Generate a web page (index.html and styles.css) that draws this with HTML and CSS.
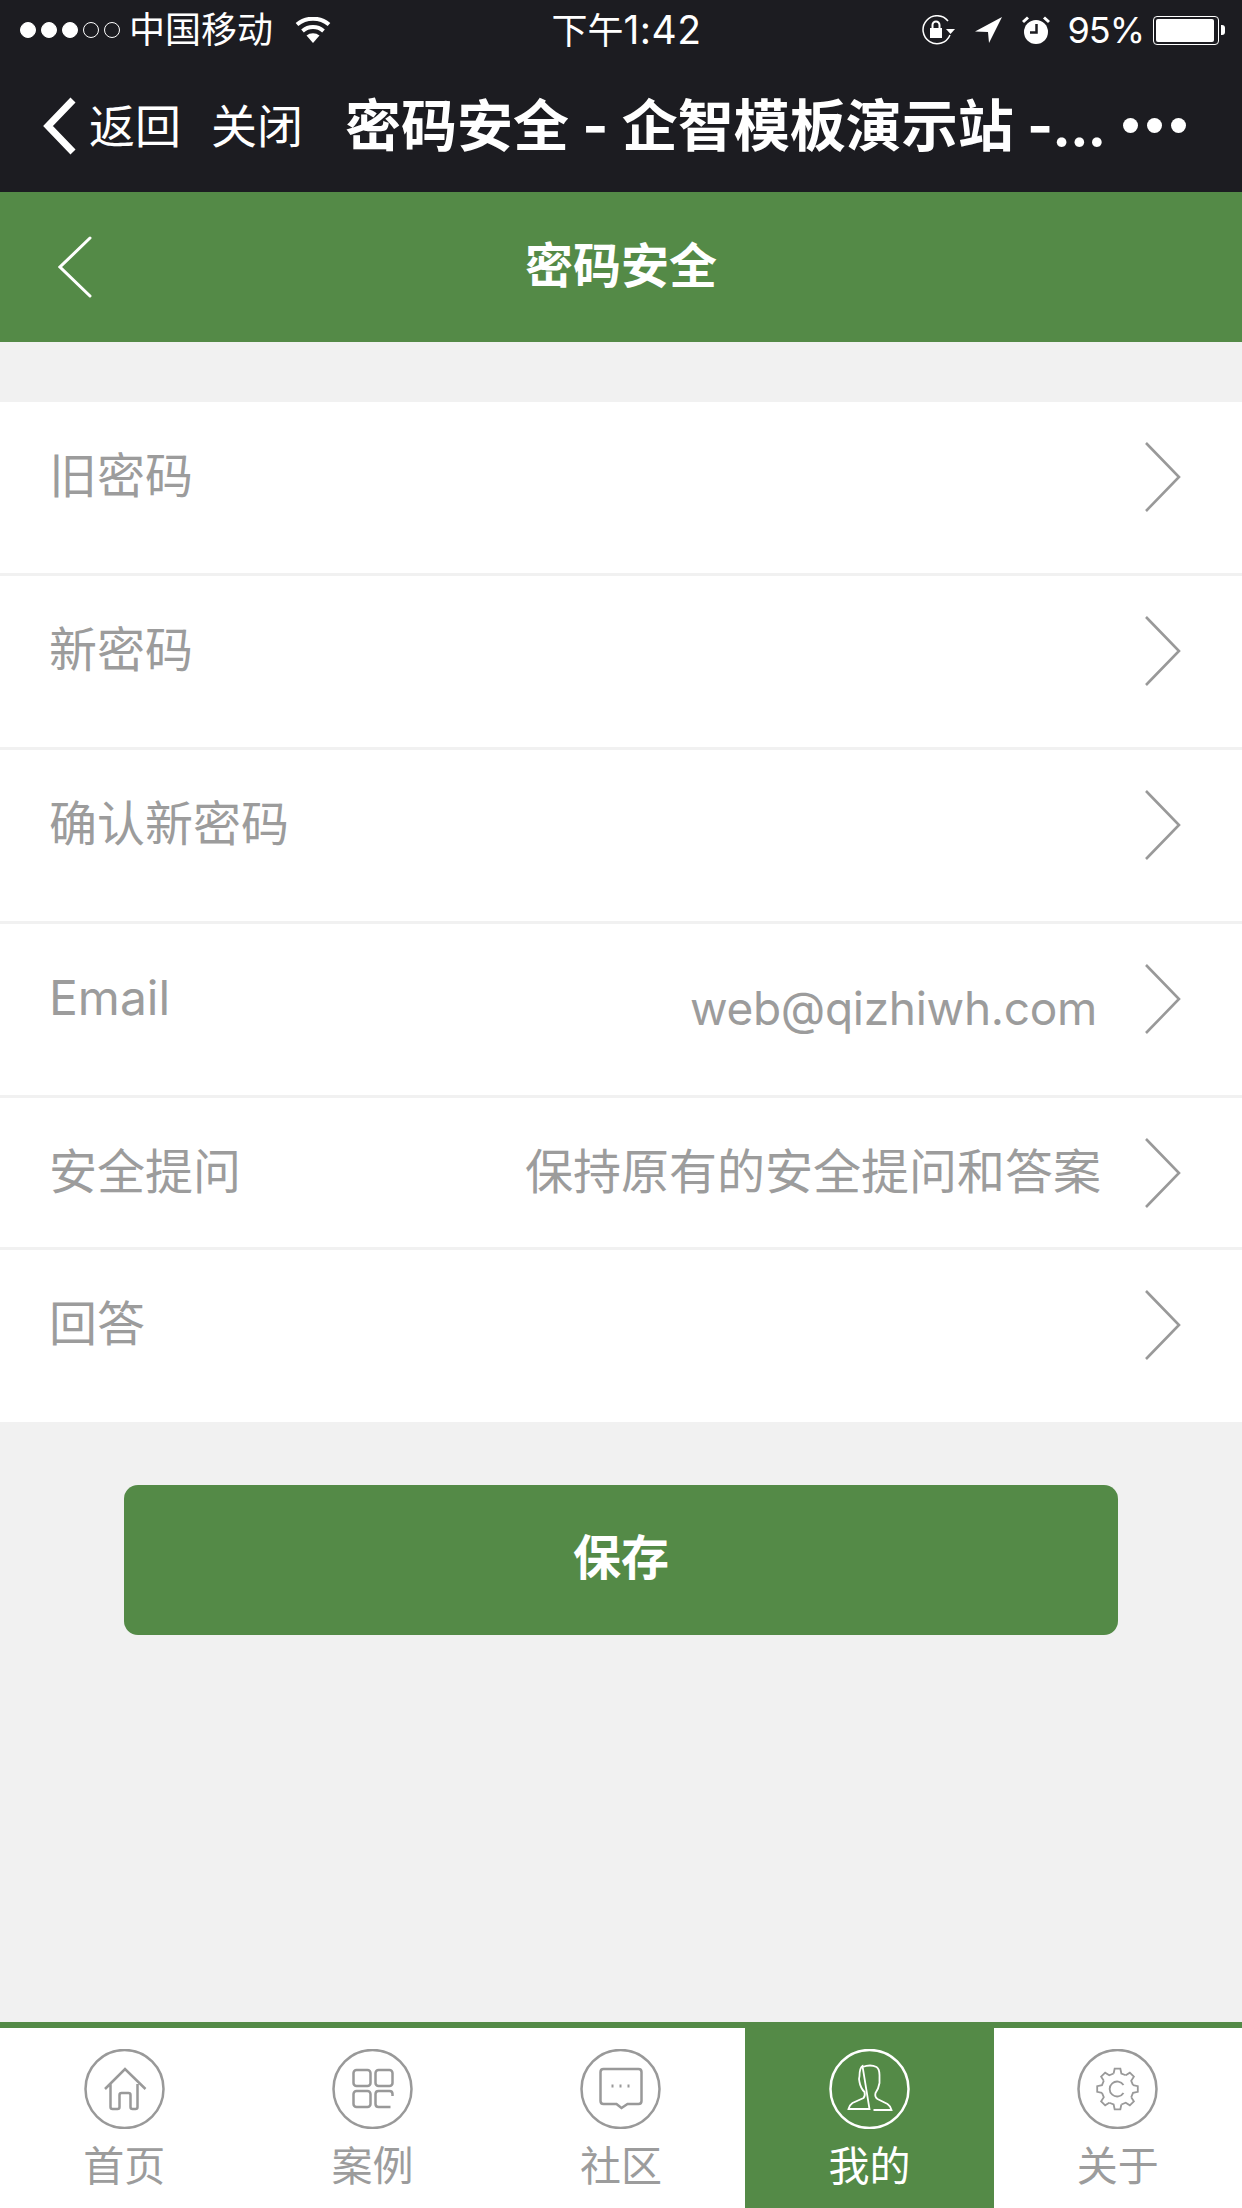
FILE: index.html
```html
<!DOCTYPE html>
<html lang="zh-CN">
<head>
    <meta charset="UTF-8">
    <meta name="viewport" content="width=device-width, initial-scale=1.0">
    <title>密码安全</title>
    <link rel="stylesheet" href="styles.css">
</head>
<body>

<div class="topbar">
    <div class="status">
        <div class="status-left">
            <span class="sig on"></span><span class="sig on"></span><span class="sig on"></span><span class="sig"></span><span class="sig"></span>
            <span class="carrier">中国移动</span>
            <svg class="wifi" viewBox="0 0 36 26"><path d="M18 26 11.5 18.6a10 10 0 0 1 13 0Z" fill="#fff"/><path d="M7.5 14a16 16 0 0 1 21 0M2 7.600a24.500 24.500 0 0 1 32 0" fill="none" stroke="#fff" stroke-width="4"/></svg>
        </div>
        <div class="status-time">下午<span class="time-num">1:42</span></div>
        <div class="status-right">
            <svg class="ico-lock" viewBox="0 0 34 30"><path d="M29 20A14 14 0 1 1 27 6" fill="none" stroke="#fff" stroke-width="1.500"/><path d="M25 14h9l-4.500 5Z" fill="#fff"/><rect x="9" y="13" width="12" height="10" fill="#fff"/><path d="M11.500 13V10a3.500 3.500 0 0 1 7 0v3" fill="none" stroke="#fff" stroke-width="2"/></svg>
            <svg class="ico-arrow" viewBox="0 0 27 26"><path d="M27 0 0 14.500l13 .5 1 11Z" fill="#fff"/></svg>
            <svg class="ico-alarm" viewBox="0 0 28 28"><circle cx="14" cy="16" r="12" fill="#fff"/><path d="M1 6 6 1.500M27 6 22 1.500" stroke="#fff" stroke-width="3"/><path d="M14.500 8v8.500H8" fill="none" stroke="#1c1c21" stroke-width="2.500"/></svg>
            <span class="battery-text">95%</span>
            <div class="battery"><div class="battery-fill"></div></div>
            <div class="battery-nub"></div>
        </div>
    </div>
    <div class="wechat-nav">
        <svg class="nav-back" viewBox="0 0 33 58"><path d="M30 3 5 29l25 26" fill="none" stroke="#fff" stroke-width="7"/></svg>
        <span class="nav-link nav-return">返回</span>
        <span class="nav-link nav-close">关闭</span>
        <span class="nav-title">密码安全 - 企智模板演示站 <span class="nav-title-tail">-...</span></span>
        <div class="nav-more"><span></span><span></span><span></span></div>
    </div>
</div>

<div class="header">
    <svg class="header-back" viewBox="0 0 34 62"><path d="M32 2 2 31l30 29" fill="none" stroke="#fff" stroke-width="3" stroke-linecap="round"/></svg>
    <h1>密码安全</h1>
</div>

<div class="form">
    <div class="row">
        <span class="label">旧密码</span>
        <svg class="chev" viewBox="0 0 36 70"><path d="M1 1 34 35 1 69" fill="none" stroke="#999" stroke-width="2.600"/></svg>
    </div>
    <div class="row">
        <span class="label">新密码</span>
        <svg class="chev" viewBox="0 0 36 70"><path d="M1 1 34 35 1 69" fill="none" stroke="#999" stroke-width="2.600"/></svg>
    </div>
    <div class="row">
        <span class="label">确认新密码</span>
        <svg class="chev" viewBox="0 0 36 70"><path d="M1 1 34 35 1 69" fill="none" stroke="#999" stroke-width="2.600"/></svg>
    </div>
    <div class="row">
        <span class="label">Email</span>
        <span class="value value-email">web@qizhiwh.com</span>
        <svg class="chev" viewBox="0 0 36 70"><path d="M1 1 34 35 1 69" fill="none" stroke="#999" stroke-width="2.600"/></svg>
    </div>
    <div class="row row-short">
        <span class="label">安全提问</span>
        <span class="value">保持原有的安全提问和答案</span>
        <svg class="chev" viewBox="0 0 36 70"><path d="M1 1 34 35 1 69" fill="none" stroke="#999" stroke-width="2.600"/></svg>
    </div>
    <div class="row row-last">
        <span class="label">回答</span>
        <svg class="chev" viewBox="0 0 36 70"><path d="M1 1 34 35 1 69" fill="none" stroke="#999" stroke-width="2.600"/></svg>
    </div>
</div>

<div class="save-wrap">
    <button class="save">保存</button>
</div>

<div class="tabs">
    <div class="tab">
        <svg class="tab-icon" viewBox="0 0 80 80"><circle cx="40" cy="40" r="39"/><path d="M20.500 40 40.500 20 61 40M26 35v23q0 2 2 2h5q2 0 2-2V46q0-2 2-2h7q2 0 2 2v12q0 2 2 2h3q2 0 2-2V35"/></svg>
        <span>首页</span>
    </div>
    <div class="tab">
        <svg class="tab-icon" viewBox="0 0 80 80"><circle cx="40" cy="40" r="39"/><rect x="21" y="21" width="17" height="16" rx="3"/><rect x="43" y="21" width="17" height="16" rx="3"/><rect x="21" y="42" width="17" height="16" rx="3"/><path d="M60 47v-2q0-3-3-3H46q-3 0-3 3v10q0 3 3 3h12"/></svg>
        <span>案例</span>
    </div>
    <div class="tab">
        <svg class="tab-icon" viewBox="0 0 80 80"><circle cx="40" cy="40" r="39"/><path d="M23 20h35q3 0 3 3v29q0 3-3 3H47l-6 4-5-4H23q-3 0-3-3V23q0-3 3-3Z"/><path class="dots" d="M31 37h2M39 37h2M47 37h2"/></svg>
        <span>社区</span>
    </div>
    <div class="tab active">
        <svg class="tab-icon thin" viewBox="0 0 80 80"><circle class="ring" cx="40" cy="40" r="39"/><path d="M33 18q8-3 14 0 3 2 3 8v8q-1 6-4 10-1 4 2 6l10 5q3 2 4 6H44M40 60H19q1-4 4-6l11-5q2-2 1-6-4-4-5-10-1-3 0-6 0-8 3-10Z"/></svg>
        <span>我的</span>
    </div>
    <div class="tab">
        <svg class="tab-icon thin" viewBox="0 0 80 80"><circle class="ring" cx="40" cy="40" r="39"/>
            <g id="gear">
                <path id="tooth" d="M36.130 24.480 37.150 19.700H42.850L43.870 24.480 48.240 26.290"/>
                <use href="#tooth" transform="rotate(45 40 40)"/>
                <use href="#tooth" transform="rotate(90 40 40)"/>
                <use href="#tooth" transform="rotate(135 40 40)"/>
                <use href="#tooth" transform="rotate(180 40 40)"/>
                <use href="#tooth" transform="rotate(225 40 40)"/>
                <use href="#tooth" transform="rotate(270 40 40)"/>
                <use href="#tooth" transform="rotate(315 40 40)"/>
            </g>
            <path d="M46 36a7.500 7.500 0 1 0 0 8"/>
        </svg>
        <span>关于</span>
    </div>
</div>

</body>
</html>
```

FILE: styles.css
```css
* {
    box-sizing: border-box;
}

body {
    margin: 0;
    height: 2208px;
    display: flex;
    flex-direction: column;
    overflow: hidden;
    background-color: #f1f1f1;
    font-family: Inter, "Noto Sans CJK SC", sans-serif;
    color: #9c9c9c;
}

/* Phone + WeChat chrome */
.topbar {
    background-color: #1c1c21;
    color: #fff;
    height: 192px;
}

.status {
    height: 60px;
    display: grid;
    grid-template-columns: 1fr auto 1fr;
    align-items: center;
    font-size: 36px;
    padding: 0 17px 0 20px;
}

.status-left,
.status-right {
    display: flex;
    align-items: center;
}

.status-right {
    justify-content: flex-end;
}

.sig {
    width: 16px;
    height: 16px;
    margin-right: 5px;
    border-radius: 50%;
    border: 1px solid #fff;
}

.sig.on {
    background-color: #fff;
}

.carrier {
    margin-left: 4px;
    line-height: 60px;
}

.wifi {
    width: 36px;
    height: 26px;
    margin-left: 22px;
}

.status-time {
    font-size: 36px;
    line-height: 58px;
    margin-left: 8px;
}

.time-num {
    font-size: 39px;
    letter-spacing: 0.5px;
}

.ico-lock {
    width: 34px;
    height: 30px;
}

.ico-arrow {
    width: 27px;
    height: 26px;
    margin-left: 20px;
}

.ico-alarm {
    width: 28px;
    height: 28px;
    margin-left: 20px;
}

.battery-text {
    margin-left: 17px;
    letter-spacing: -1px;
}

.battery {
    width: 66px;
    height: 29px;
    margin-left: 9px;
    padding: 2px;
    border: 1px solid #fff;
    border-radius: 4px;
}

.battery-fill {
    width: 96%;
    height: 100%;
    background-color: #fff;
    border-radius: 2px;
}

.battery-nub {
    width: 4px;
    height: 10px;
    margin-left: 2px;
    background-color: #fff;
    border-radius: 0 3px 3px 0;
}

.wechat-nav {
    height: 132px;
    display: flex;
    align-items: center;
    padding-left: 43px;
}

.nav-back {
    width: 33px;
    height: 58px;
}

.nav-link {
    font-size: 46px;
    line-height: 1;
}

.nav-return {
    margin-left: 13px;
}

.nav-close {
    margin-left: 30px;
}

.nav-title {
    margin-left: 42px;
    width: 778px;
    font-size: 56px;
    font-weight: 700;
    line-height: 1;
    white-space: nowrap;
}

.nav-title-tail {
    letter-spacing: -1px;
}

.nav-more {
    display: flex;
    gap: 9px;
    margin-bottom: 2px;
}

.nav-more span {
    width: 15px;
    height: 15px;
    border-radius: 50%;
    background-color: #fff;
}

/* Green page header */
.header {
    height: 150px;
    background-color: #548a47;
    display: grid;
    grid-template-columns: 1fr auto 1fr;
    align-items: center;
    padding-left: 58px;
}

.header-back {
    width: 34px;
    height: 62px;
}

.header h1 {
    margin: 0 0 10px;
    color: #fff;
    font-size: 48px;
    font-weight: 700;
    transform: translateX(-29px);
}

/* Form rows */
.form {
    margin-top: 60px;
    background-color: #fff;
}

.row {
    height: 174px;
    display: flex;
    align-items: flex-start;
    padding: 40px 61px 0 49px;
    border-bottom: 3px solid #f1f1f1;
}

.row-short {
    height: 152px;
}

.row-last {
    height: 172px;
    border-bottom: none;
}

.label,
.value {
    font-size: 48px;
    line-height: 68px;
    color: #9c9c9c;
}

.value {
    margin-left: auto;
    margin-right: 44px;
}

.value-email {
    padding-top: 10px;
    margin-right: 48px;
    font-size: 46px;
    letter-spacing: -0.3px;
}

.chev {
    width: 36px;
    height: 70px;
    flex: none;
}

.label + .chev {
    margin-left: auto;
}

.save-wrap {
    margin-top: 63px;
    padding: 0 124px;
}

.save {
    display: block;
    width: 100%;
    height: 150px;
    padding: 0 0 12px;
    border: none;
    border-radius: 14px;
    background-color: #548a47;
    color: #fff;
    font-family: inherit;
    font-size: 48px;
    font-weight: 700;
}

/* Bottom tabs */
.tabs {
    margin-top: auto;
    height: 186px;
    display: grid;
    grid-template-columns: repeat(5, 1fr);
    background-color: #fff;
    border-top: 6px solid #548a47;
}

.tab {
    display: flex;
    flex-direction: column;
    align-items: center;
    padding-top: 21px;
    font-size: 41px;
    line-height: 40px;
    color: #9c9c9c;
}

.tab span {
    margin-top: 17px;
}

.tab.active {
    background-color: #548a47;
    color: #fff;
}

.tab-icon {
    width: 81px;
    height: 80px;
    fill: none;
    stroke: #999;
    stroke-width: 2.500;
}

.tab-icon.thin {
    stroke-width: 1.800;
}

.tab-icon .ring {
    stroke-width: 2.500;
}

.tab-icon .dots {
    stroke-width: 3;
}

.tab.active .tab-icon {
    stroke: #fff;
}
```
